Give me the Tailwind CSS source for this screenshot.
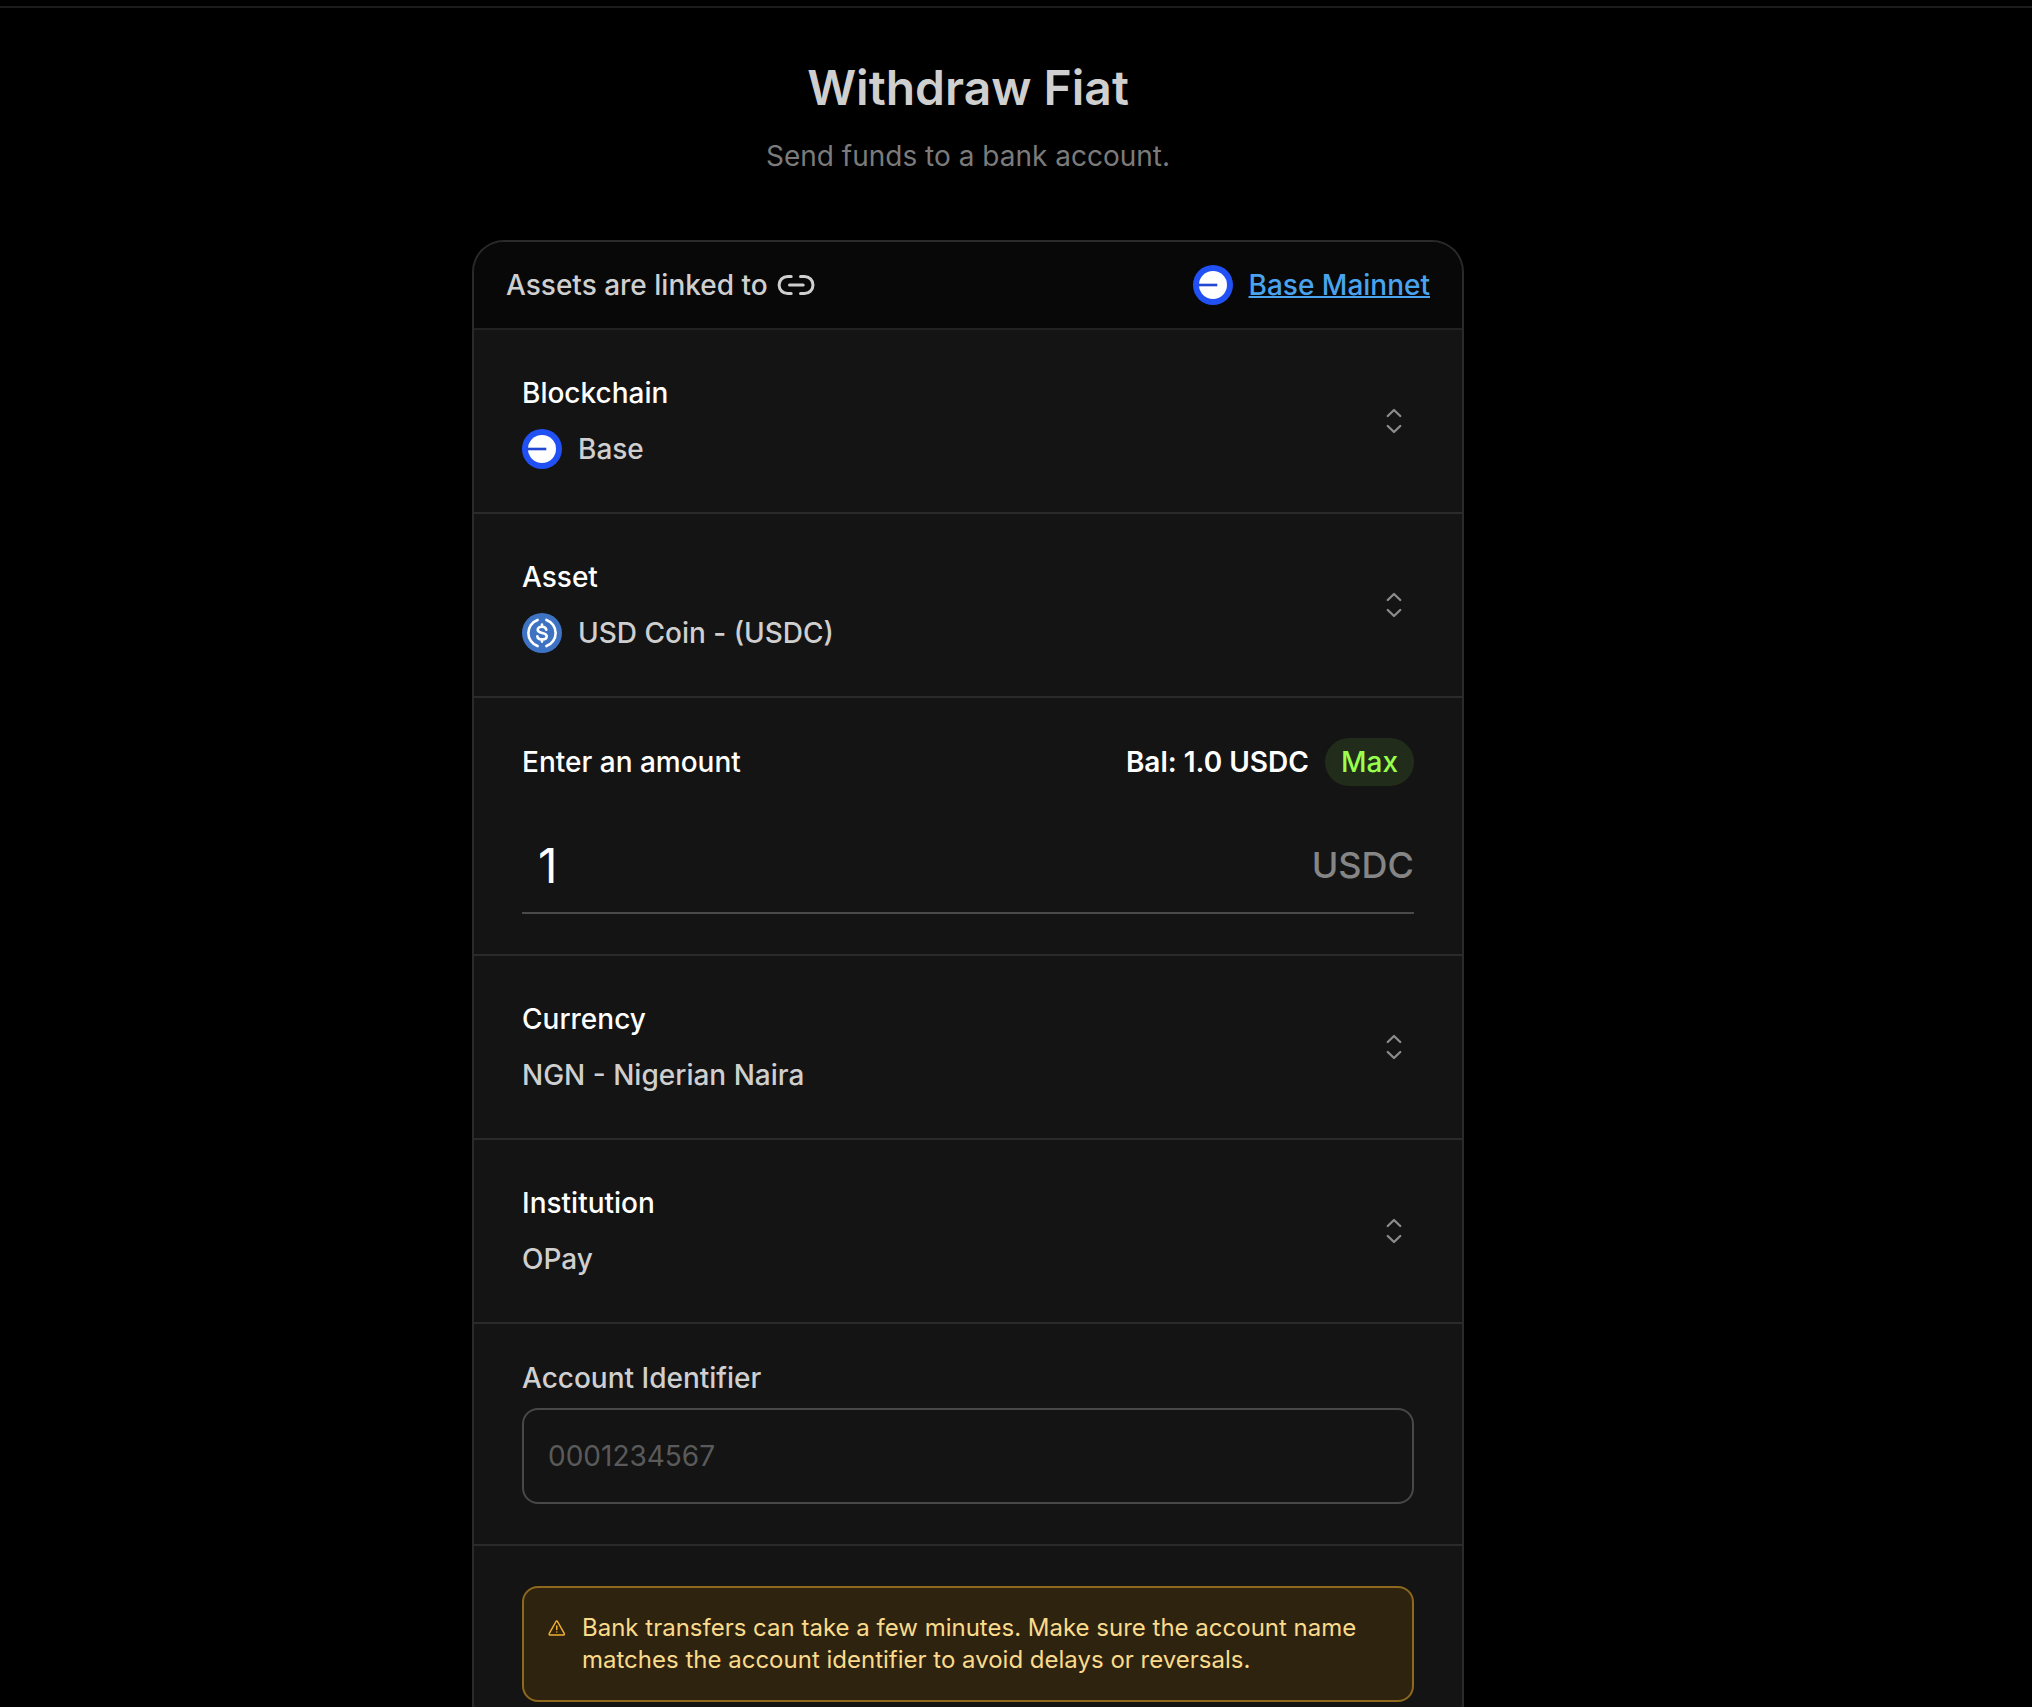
<!DOCTYPE html>
<html lang="en">
<head>
    <meta charset="UTF-8">
    <meta name="viewport" content="width=device-width, initial-scale=1.0">
    <title>Withdraw Fiat</title>
    <!-- Tailwind CSS for styling -->
    <script src="https://cdn.jsdelivr.net/npm/@tailwindcss/browser@4"></script>
</head>
<body class="bg-black min-h-screen overflow-x-hidden font-['Inter',sans-serif] text-[28px] leading-10 text-[#cfcfcf]">
    <!-- Shared icons -->
    <svg class="hidden" aria-hidden="true">
        <symbol id="icon-base" viewBox="0 0 40 40">
            <circle cx="20" cy="20" r="20" fill="#2151f5" />
            <circle cx="20" cy="20" r="14" fill="#fff" />
            <path d="M5.5 20H24.3" stroke="#2148d0" stroke-width="2.6" />
        </symbol>
        <symbol id="icon-chevrons" viewBox="0 0 24 24">
            <path d="M8.25 15 12 18.6 15.75 15m-7.5-6L12 5.4 15.75 9" fill="none" stroke="currentColor" stroke-width="1.4" stroke-linecap="round" stroke-linejoin="round" />
        </symbol>
    </svg>

    <div class="mt-1.5 border-t-2 border-[#1c1c1c]"></div>

    <main class="pt-12 pr-24">
        <!-- Page heading -->
        <header class="text-center">
            <h1 class="text-5xl leading-16 font-semibold">Withdraw Fiat</h1>
            <p class="mt-4 text-[#7b7b7b]">Send funds to a bank account.</p>
        </header>

        <form class="mt-16 mx-auto max-w-[992px] rounded-t-[32px] border-2 border-b-0 border-[#2a2a2a] bg-[#141414] font-medium overflow-hidden">
            <!-- Linked network -->
            <div class="flex items-center justify-between px-8 py-[23px] bg-[#080808] border-b-2 border-[#222222]">
                <div class="flex items-center gap-2">
                    <span>Assets are linked to</span>
                    <svg class="w-10 h-10" viewBox="0 0 40 40" fill="none" stroke="currentColor" stroke-width="3" stroke-linecap="round">
                        <path d="M15.2 11.4h-3.5a8.6 8.6 0 0 0 0 17.2h3.5M24.5 11.4h3.9a8.6 8.6 0 0 1 0 17.2h-3.9M13.5 20h13.7" />
                    </svg>
                </div>
                <div class="flex items-center gap-4">
                    <svg class="w-10 h-10"><use href="#icon-base" /></svg>
                    <a href="#" class="text-[#4aa3ee] underline decoration-2">Base Mainnet</a>
                </div>
            </div>

            <!-- Blockchain -->
            <button type="button" class="flex w-full items-center justify-between px-12 py-[43px] text-left border-b-2 border-[#2a2a2a]">
                <span class="flex flex-col gap-4">
                    <span class="text-white">Blockchain</span>
                    <span class="flex items-center gap-4">
                        <svg class="w-10 h-10"><use href="#icon-base" /></svg>
                        Base
                    </span>
                </span>
                <svg class="w-10 h-10 text-[#8b8b8b]"><use href="#icon-chevrons" /></svg>
            </button>

            <!-- Asset -->
            <button type="button" class="flex w-full items-center justify-between px-12 py-[43px] text-left border-b-2 border-[#2a2a2a]">
                <span class="flex flex-col gap-4">
                    <span class="text-white">Asset</span>
                    <span class="flex items-center gap-4">
                        <svg class="w-10 h-10" viewBox="0 0 40 40" fill="none" stroke="#fff" stroke-linecap="round">
                            <circle cx="20" cy="20" r="20" fill="#3e73c4" stroke="none" />
                            <path d="M15.6 6.900A13.900 13.900 0 0 0 15.600 33.100M24.400 6.900A13.900 13.900 0 0 1 24.400 33.100" stroke-width="2.6" />
                            <path d="M24.3 16.7c-.4-1.9-2-3-4.300-3-2.500 0-4.300 1.200-4.300 3.100 0 4.600 9 1.800 9 6.400 0 2-1.900 3.200-4.700 3.200-2.600 0-4.400-1.200-4.700-3.200M20 11.500v2M20 26.600v2" stroke-width="2.6" />
                        </svg>
                        USD Coin - (USDC)
                    </span>
                </span>
                <svg class="w-10 h-10 text-[#8b8b8b]"><use href="#icon-chevrons" /></svg>
            </button>

            <!-- Amount -->
            <div class="px-12 py-10 border-b-2 border-[#2a2a2a]">
                <div class="flex items-center justify-between text-white">
                    <label for="amount">Enter an amount</label>
                    <div class="flex items-center gap-4">
                        <span class="font-semibold">Bal: 1.0 USDC</span>
                        <button type="button" class="h-12 px-4 rounded-full bg-[#222c1a] text-[#99ff4d]">Max</button>
                    </div>
                </div>
                <div class="mt-8 flex items-center border-b-2 border-[#4a4a4a]">
                    <input id="amount" type="text" inputmode="decimal" value="1" class="h-[94px] min-w-0 flex-1 px-4 bg-transparent font-normal text-5xl text-white outline-none">
                    <span class="text-4xl text-[#858585]">USDC</span>
                </div>
            </div>

            <!-- Currency -->
            <button type="button" class="flex w-full items-center justify-between px-12 py-[43px] text-left border-b-2 border-[#2a2a2a]">
                <span class="flex flex-col gap-4">
                    <span class="text-white">Currency</span>
                    <span>NGN - Nigerian Naira</span>
                </span>
                <svg class="w-10 h-10 text-[#8b8b8b]"><use href="#icon-chevrons" /></svg>
            </button>

            <!-- Institution -->
            <button type="button" class="flex w-full items-center justify-between px-12 py-[43px] text-left border-b-2 border-[#2a2a2a]">
                <span class="flex flex-col gap-4">
                    <span class="text-white">Institution</span>
                    <span>OPay</span>
                </span>
                <svg class="w-10 h-10 text-[#8b8b8b]"><use href="#icon-chevrons" /></svg>
            </button>

            <!-- Account -->
            <div class="flex flex-col gap-4 px-12 py-10 border-b-2 border-[#2a2a2a]">
                <label for="account" class="leading-7">Account Identifier</label>
                <input id="account" type="text" placeholder="0001234567" class="h-24 w-full px-6 rounded-2xl border-2 border-[#484848] bg-transparent font-normal text-white placeholder:text-[#5a5a5a] outline-none">
            </div>

            <!-- Transfer notice -->
            <div class="px-12 py-10">
                <div role="alert" class="flex gap-4 p-6 rounded-2xl border-2 border-[#8d681d] bg-[#2e230f] text-2xl leading-8 font-normal text-[#fadb8c]">
                    <svg class="mt-2 w-[18px] h-[18px] shrink-0 text-[#f0b033]" viewBox="0 0 18 18" fill="none" stroke="currentColor" stroke-width="1.5" stroke-linecap="round" stroke-linejoin="round">
                        <path d="M8 1.5 1.3 13.4a1.1 1.1 0 0 0 1 1.7h12.9a1.1 1.1 0 0 0 1-1.7L9.5 1.5a.9.9 0 0 0-1.5 0zM8.75 6v3.5M8.75 12v.1" />
                    </svg>
                    <p>Bank transfers can take a few minutes. Make sure the account name matches the account identifier to avoid delays or reversals.</p>
                </div>
            </div>
        </form>
    </main>
</body>
</html>
